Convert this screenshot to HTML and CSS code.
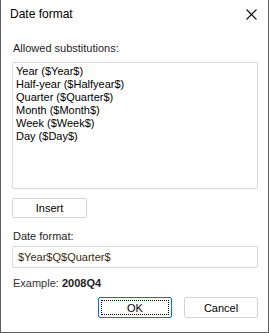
FILE: index.html
```html
<!DOCTYPE html>
<html>
<head>
<meta charset="utf-8">
<link rel="stylesheet" href="styles.css">
</head>
<body>
<div class="dialog">
  <div class="titlebar">
    <span class="title">Date format</span>
    <span class="close">
      <svg width="11" height="11" viewBox="0 0 11 11"><path d="M0.5 0.5 L10.5 10.5 M10.5 0.5 L0.5 10.5" stroke="#111" stroke-width="1.1" fill="none"/></svg>
    </span>
  </div>
  <div class="content">
    <div class="label first">Allowed substitutions:</div>
    <div class="listbox">
      <div class="item">Year ($Year$)</div>
      <div class="item">Half-year ($Halfyear$)</div>
      <div class="item">Quarter ($Quarter$)</div>
      <div class="item">Month ($Month$)</div>
      <div class="item">Week ($Week$)</div>
      <div class="item">Day ($Day$)</div>
    </div>
    <div class="btn insert">Insert</div>
    <div class="label fmt">Date format:</div>
    <div class="input">$Year$Q$Quarter$</div>
    <div class="example">Example: <b>2008Q4</b></div>
    <div class="actions">
      <div class="btn ok"><span class="focus">OK</span></div>
      <div class="btn cancel">Cancel</div>
    </div>
  </div>
</div>
</body>
</html>
```
FILE: styles.css
```css
html, body {
  margin: 0;
  padding: 0;
  background: #ffffff;
}
.dialog {
  width: 269px;
  height: 333px;
  box-sizing: border-box;
  border: 1px solid #5f5f5f;
  border-top: none;
  background: #ffffff;
  font-family: "Liberation Sans", Arial, sans-serif;
  font-size: 11px;
  color: #1e1e1e;
  display: flex;
  flex-direction: column;
}
.titlebar {
  height: 30px;
  display: flex;
  align-items: flex-start;
  justify-content: space-between;
  box-sizing: border-box;
  padding: 6px 10px 0 9px;
}
.title {
  font-size: 12px;
  line-height: 16px;
  color: #000;
}
.close {
  display: flex;
  padding-top: 3px;
  padding-right: 1px;
}
.content {
  padding: 0 10px 0 11px;
  display: flex;
  flex-direction: column;
}
.label {
  line-height: 13px;
  padding-left: 1px;
}
.label.first {
  margin-top: 12px;
}
.listbox {
  margin-top: 7px;
  height: 127px;
  box-sizing: border-box;
  border: 1px solid #d9d9d9;
  border-radius: 2px;
  padding: 2px 3px;
  color: #000;
}
.item {
  line-height: 13px;
}
.btn {
  box-sizing: border-box;
  border: 1px solid #d4d4d4;
  border-radius: 2px;
  background: #ffffff;
  display: flex;
  align-items: center;
  justify-content: center;
  color: #000;
}
.insert {
  margin-top: 9px;
  width: 75px;
  height: 20px;
}
.label.fmt {
  margin-top: 12px;
}
.input {
  margin-top: 3px;
  height: 22px;
  box-sizing: border-box;
  border: 1px solid #d9d9d9;
  border-radius: 2px;
  padding-left: 5px;
  display: flex;
  align-items: center;
  color: #3a2a10;
}
.example {
  margin-top: 9px;
  line-height: 13px;
  padding-left: 1px;
  color: #333;
}
.example b {
  color: #222;
}
.actions {
  margin-top: 7px;
  display: flex;
  justify-content: flex-end;
  gap: 12px;
}
.ok, .cancel {
  width: 74px;
  height: 21px;
}
.ok {
  border-color: #0078d7;
  padding: 2px;
}
.focus {
  flex: 1;
  align-self: stretch;
  display: flex;
  align-items: center;
  justify-content: center;
  outline: 1px dotted #000;
  outline-offset: -1px;
}
```
